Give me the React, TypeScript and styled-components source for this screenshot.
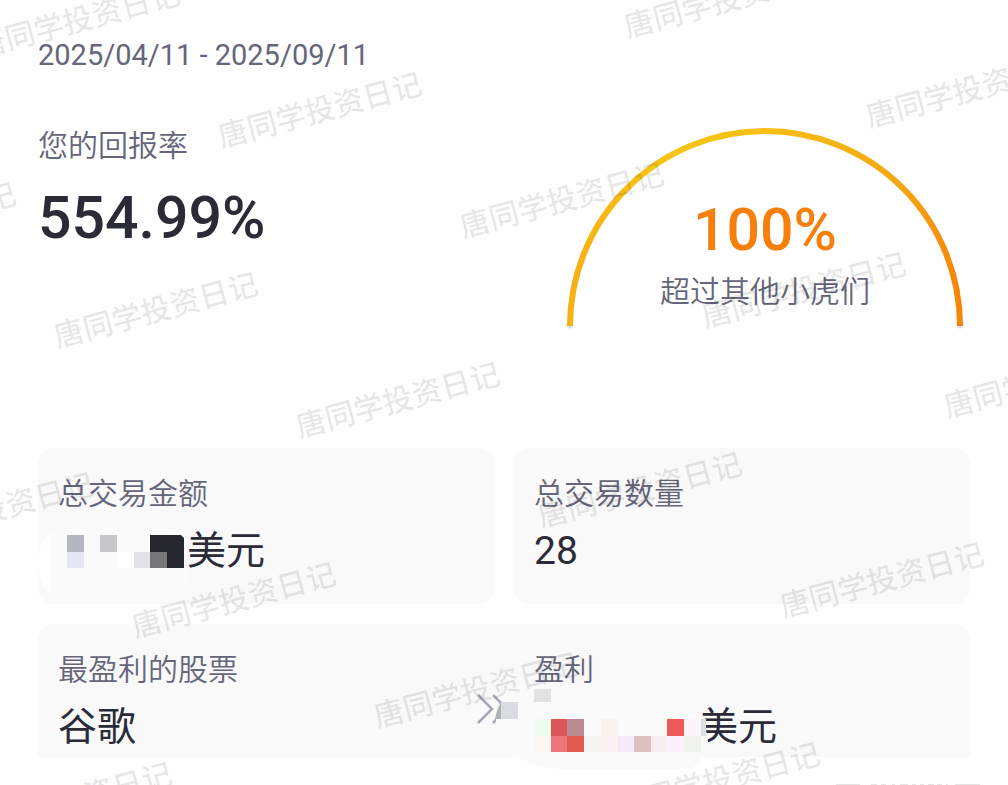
import React from "react";
import styled, { createGlobalStyle } from "styled-components";

const GlobalStyle = createGlobalStyle`
  * { box-sizing: border-box; }
  body {
    margin: 0;
    background: #fefefe;
    color: #2b2b38;
    font-family: Roboto, "Noto Sans CJK SC", sans-serif;
  }
`;

const Page = styled.main`
  position: relative;
  overflow: hidden;
  min-height: 100vh;
  padding: 38px 38px 28px;
`;

const DateRange = styled.p`
  margin: 0;
  font-size: 29px;
  line-height: 34px;
  color: #66667a;
`;

const Hero = styled.section`
  display: flex;
  justify-content: space-between;
  align-items: flex-start;
  margin-top: 54px;
  min-height: 322px;
`;

const Label = styled.h2`
  margin: 0;
  font-size: 30px;
  font-weight: 350;
  line-height: 40px;
  color: #66667a;
`;

const BigNumber = styled.p<{ $accent?: boolean }>`
  margin: 0;
  font-size: 59px;
  font-weight: 500;
  line-height: 64px;
  color: ${(p) => (p.$accent ? "#f77f0c" : "#2b2b38")};
`;

const ReturnBlock = styled.div`
  display: flex;
  flex-direction: column;
  gap: 20px;
`;

const Gauge = styled.div`
  display: grid;
  width: 398px;
  margin-right: 6px;
  > * { grid-area: 1 / 1; }
`;

const GaugeText = styled.div`
  display: flex;
  flex-direction: column;
  align-items: center;
  gap: 10px;
  padding-top: 72px;
`;

const Cards = styled.section`
  display: grid;
  grid-template-columns: 1fr 1fr;
  gap: 20px;
`;

const Card = styled.article`
  min-height: 156px;
  padding: 26px 20px 24px;
  border-radius: 16px;
  background: #f9f9f9;
`;

const WideCard = styled(Card)`
  grid-column: 1 / -1;
  display: grid;
  grid-template-columns: 1fr 60px 1fr;
  min-height: 133px;
  padding-bottom: 0;
  border-radius: 16px 16px 0 0;
`;

const Value = styled.p`
  display: flex;
  align-items: flex-start;
  margin: 8px 0 0;
  font-size: 39px;
  line-height: 58px;
`;

const ChevronBox = styled.div`
  padding: 43px 0 0 2px;
`;

const Redacted = styled.span<{ $width: number }>`
  position: relative;
  flex: none;
  width: ${(p) => p.$width}px;
  height: 56px;
  svg {
    position: absolute;
    z-index: 2;
    left: 0;
    top: 0;
    overflow: visible;
  }
`;

const WatermarkLayer = styled.div`
  position: absolute;
  inset: 0;
  z-index: 1;
  overflow: hidden;
  pointer-events: none;
`;

const Watermark = styled.span`
  position: absolute;
  font-size: 30px;
  font-weight: 500;
  line-height: 40px;
  white-space: nowrap;
  color: rgba(0, 0, 0, 0.09);
  transform: translate(-50%, -50%) rotate(-15deg);
`;

const NextMark = styled.svg`
  position: absolute;
  right: 28px;
  bottom: 0;
`;

type Tile = [x: number, y: number, w: number, h: number, fill: string];

const amountTiles: Tile[] = [
  [9, 13, 17, 17, "#b6b6c1"],
  [9, 30, 17, 16, "#e6e6f3"],
  [42, 13, 17, 17, "#c8c8cb"],
  [59, 30, 17, 16, "#ffffff"],
  [76, 30, 17, 16, "#e2e3e6"],
  [109, 30, 17, 16, "#26262f"],
  [92, 30, 17, 16, "#77777b"],
];

const profitTiles: Tile[] = [
  [0, -9, 17, 13, "#e2e2e2"],
  [-33, 4, 17, 17, "#d9dae2"],
  [0, 21, 17, 17, "#effdef"],
  [0, 38, 17, 16, "#fcf6f4"],
  [17, 21, 16, 17, "#de5557"],
  [33, 21, 17, 17, "#bb8a92"],
  [17, 38, 16, 16, "#ed757b"],
  [33, 38, 17, 16, "#e05c50"],
  [50, 38, 17, 16, "#f3f3f1"],
  [67, 21, 17, 33, "#fcf2f2"],
  [84, 38, 16, 16, "#f6e9f9"],
  [100, 38, 17, 16, "#dfc0c0"],
  [117, 38, 16, 16, "#f9eeef"],
  [133, 21, 17, 17, "#ee5a5a"],
  [133, 38, 17, 16, "#fbf0fd"],
  [150, 21, 17, 17, "#fbf5fa"],
  [150, 38, 17, 16, "#f0f4ef"],
  [167, 21, 5, 17, "#dfdfe2"],
];

const Tiles = ({ tiles }: { tiles: Tile[] }) => (
  <>
    {tiles.map(([x, y, w, h, fill]) => (
      <rect key={`${x}-${y}`} x={x} y={y} width={w} height={h} fill={fill} shapeRendering="crispEdges" />
    ))}
  </>
);

const MARK_TEXT = "唐同学投资日记";

const marks: { x: number; y: number }[] = [];
for (let row = -2; row <= 5; row++) {
  for (let col = -4; col <= 5; col++) {
    const x = 320 + col * 242 - row * 164;
    const y = 111 + col * 90 + row * 200;
    if (x > -110 && x < 1120 && y > -40 && y < 810) marks.push({ x, y });
  }
}

export default function App() {
  return (
    <>
      <GlobalStyle />
      <Page>
        <DateRange>2025/04/11 - 2025/09/11</DateRange>

        <Hero>
          <ReturnBlock>
            <Label>您的回报率</Label>
            <BigNumber>554.99%</BigNumber>
          </ReturnBlock>
          <Gauge>
            <svg width="398" height="204" viewBox="0 0 398 204" aria-hidden="true">
              <defs>
                <linearGradient id="arc" gradientUnits="userSpaceOnUse" x1="0" y1="0" x2="398" y2="0">
                  <stop offset="0" stopColor="#f8ae12" />
                  <stop offset="0.22" stopColor="#f7c415" />
                  <stop offset="0.5" stopColor="#f8c013" />
                  <stop offset="0.85" stopColor="#f4a612" />
                  <stop offset="1" stopColor="#f68208" />
                </linearGradient>
              </defs>
              <path d="M4 200A195 195 0 0 1 394 200" fill="none" stroke="#dedee3" strokeWidth="5" strokeLinecap="round" />
              <path d="M4 200A195 195 0 0 1 394 200" fill="none" stroke="url(#arc)" strokeWidth="6" />
            </svg>
            <GaugeText>
              <BigNumber $accent>100%</BigNumber>
              <Label as="p">超过其他小虎们</Label>
            </GaugeText>
          </Gauge>
        </Hero>

        <Cards>
          <Card>
            <Label>总交易金额</Label>
            <Value>
              <Redacted $width={129}>
                <svg width="129" height="56" aria-hidden="true">
                  <path d="M-20 40Q-20 5 22 5H108Q130 8 130 28V60Q124 76 100 77H22Q-18 76 -20 40Z" fill="#fafafa" />
                  <path d="M-20 40Q-20 18 -7 11V73Q-20 62 -20 40Z" fill="#fefefe" />
                  <path d="M92 13H123L126 16V46H92Z" fill="#26262f" />
                  <Tiles tiles={amountTiles} />
                </svg>
              </Redacted>
              美元
            </Value>
          </Card>
          <Card>
            <Label>总交易数量</Label>
            <Value>28</Value>
          </Card>
          <WideCard>
            <div>
              <Label>最盈利的股票</Label>
              <Value>谷歌</Value>
            </div>
            <ChevronBox>
              <svg width="34" height="32" viewBox="0 0 34 32" fill="none" stroke="#a6a7b5" strokeWidth="2.5" aria-hidden="true">
                <path d="M2 2L16 16L2 30M17 2L31 16L17 30" />
              </svg>
            </ChevronBox>
            <div>
              <Label>盈利</Label>
              <Value>
                <Redacted $width={165}>
                  <svg width="174" height="56" aria-hidden="true">
                    <path
                      d="M-38 22Q-36 6 -22 -3Q0 -10 28 -4Q48 1 75 1L120 3Q150 6 164 20Q174 30 174 44Q170 64 156 71H24Q-16 66 -31 47Q-39 36 -38 22Z"
                      fill="#fafafa"
                    />
                    <path d="M-33 4V21H-39Q-37 11 -33 4Z" fill="#b0b0b7" />
                    <Tiles tiles={profitTiles} />
                  </svg>
                </Redacted>
                美元
              </Value>
            </div>
          </WideCard>
        </Cards>

        <WatermarkLayer aria-hidden="true">
          {marks.map(({ x, y }) => (
            <Watermark key={`${x}-${y}`} style={{ left: x, top: y }}>
              {MARK_TEXT}
            </Watermark>
          ))}
        </WatermarkLayer>
        <NextMark width="146" height="1" viewBox="0 0 146 1" stroke="#e4e4e4" strokeWidth="2" aria-hidden="true">
          <path d="M2 0H26M37 0H43M47 0H52M58 0H61M66 0H74M78 0H82M86 0H90M94 0H100M103 0H108M112 0H114M121 0H146" />
        </NextMark>
      </Page>
    </>
  );
}
